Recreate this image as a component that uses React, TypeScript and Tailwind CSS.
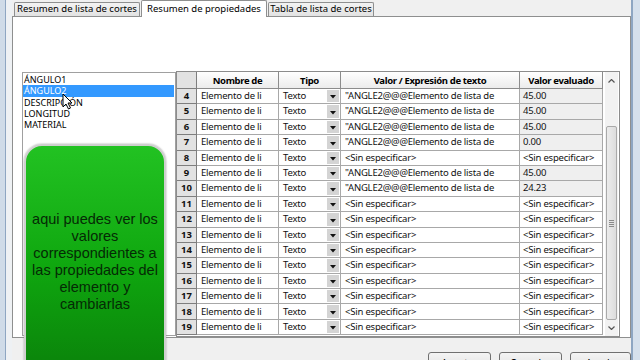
import React from "react";

type Row = { n: number; v: string; e: string };
const Q = '"ANGLE2@@@Elemento de lista de';
const S = "<Sin especificar>";
const rows: Row[] = [
  { n: 4, v: Q, e: "45.00" },
  { n: 5, v: Q, e: "45.00" },
  { n: 6, v: Q, e: "45.00" },
  { n: 7, v: Q, e: "0.00" },
  { n: 8, v: S, e: S },
  { n: 9, v: Q, e: "45.00" },
  { n: 10, v: Q, e: "24.23" },
  { n: 11, v: S, e: S },
  { n: 12, v: S, e: S },
  { n: 13, v: S, e: S },
  { n: 14, v: S, e: S },
  { n: 15, v: S, e: S },
  { n: 16, v: S, e: S },
  { n: 17, v: S, e: S },
  { n: 18, v: S, e: S },
  { n: 19, v: S, e: S },
];

function DownTri() {
  return (
    <svg width="6" height="4" viewBox="0 0 6 4">
      <path d="M0 0 H6 L3 3.5 Z" fill="#111" />
    </svg>
  );
}

function GridRow({ r }: { r: Row }) {
  const numeric = r.e !== S;
  return (
    <div className="flex h-[15.4px] text-[9.5px] tracking-[-0.2px] text-[#111]">
      <div className="w-[20px] shrink-0 bg-[#e2e2e2] border-r border-b border-[#7e7e7e] flex items-center justify-center font-bold tracking-normal">
        {r.n}
      </div>
      <div className="w-[82px] shrink-0 border-r border-b border-[#a8a8a8] bg-white flex items-center pl-[4px] overflow-hidden whitespace-nowrap">
        Elemento de li
      </div>
      <div className="w-[62px] shrink-0 border-r border-b border-[#a8a8a8] bg-white flex">
        <span className="flex-1 flex items-center pl-[4px]">Texto</span>
        <span className="w-[12px] my-[1px] mr-[1px] bg-[#d4d4d4] flex items-end justify-center pb-[3px]">
          <DownTri />
        </span>
      </div>
      <div className="w-[179px] shrink-0 border-r border-b border-[#a8a8a8] bg-white flex items-center pl-[4px] overflow-hidden whitespace-nowrap">
        {r.v}
      </div>
      <div
        className={
          "w-[83px] shrink-0 border-r border-b border-[#a8a8a8] flex items-center pl-[3px] overflow-hidden whitespace-nowrap " +
          (numeric ? "bg-[#efefef]" : "bg-white")
        }
      >
        {r.e}
      </div>
    </div>
  );
}

export default function App() {
  return (
    <div className="relative w-[640px] h-[360px] overflow-hidden flex bg-[#f0f0f0] font-['Noto_Sans',sans-serif] text-black">
      {/* left window frame */}
      <div className="flex w-[12px] shrink-0">
        <div className="w-[5px] bg-[#cfdbe8]" />
        <div className="w-[1px] bg-[#8ea6c2]" />
        <div className="w-[6px] bg-[#eef1f4]" />
      </div>

      {/* dialog content */}
      <div className="w-[619px] shrink-0 flex flex-col">
        {/* tabs */}
        <div className="h-[16px] flex items-end pl-[2px] gap-[1px] text-[9.5px]">
          <div className="w-[126px] h-[14px] border border-b-0 border-[#8e8f8f] rounded-t-[2px] bg-gradient-to-b from-[#f3f3f3] to-[#e2e2e2] flex items-center justify-center whitespace-nowrap">
            Resumen de lista de cortes
          </div>
          <div className="w-[126px] h-[17px] -mb-[1px] relative z-10 border border-b-0 border-[#8e8f8f] rounded-t-[2px] bg-white flex items-start pt-[1px] justify-center whitespace-nowrap">
            Resumen de propiedades
          </div>
          <div className="w-[106px] h-[14px] border border-b-0 border-[#8e8f8f] rounded-t-[2px] bg-gradient-to-b from-[#f3f3f3] to-[#e2e2e2] flex items-center justify-center whitespace-nowrap">
            Tabla de lista de cortes
          </div>
        </div>

        {/* panel */}
        <div className="h-[324px] border border-[#8e8f8f] bg-white pl-[9px] pt-[54px] flex items-start">
          {/* list */}
          <div className="w-[154px] h-[264px] mt-[1px] border border-[#a0a0a0] bg-white text-[9px] leading-[11.3px] pt-[1px]">
            <div className="pl-[1px]">ÁNGULO1</div>
            <div className="pl-[1px] mr-[1px] bg-[#3399ff] text-white">ÁNGULO2</div>
            <div className="pl-[1px]">DESCRIPCIÓN</div>
            <div className="pl-[1px]">LONGITUD</div>
            <div className="pl-[1px]">MATERIAL</div>
          </div>

          {/* grid */}
          <div className="w-[444px] h-[266px] border border-[#8c8c8c] bg-white flex">
            <div className="w-[426px] flex flex-col">
              <div className="flex h-[17px] text-[9.5px] tracking-[-0.35px] font-bold leading-[11px]">
                <div className="w-[20px] shrink-0 bg-[#e2e2e2] border-r border-b border-[#7e7e7e]" />
                <div className="w-[82px] shrink-0 border-r border-b border-[#8c8c8c] bg-gradient-to-b from-white to-[#ececec] text-center pt-[3px] overflow-hidden">
                  Nombre de propiedad
                </div>
                <div className="w-[62px] shrink-0 border-r border-b border-[#8c8c8c] bg-gradient-to-b from-white to-[#ececec] text-center pt-[3px]">
                  Tipo
                </div>
                <div className="w-[179px] shrink-0 border-r border-b border-[#8c8c8c] bg-gradient-to-b from-white to-[#ececec] text-center pt-[3px] whitespace-nowrap">
                  Valor / Expresión de texto
                </div>
                <div className="w-[83px] shrink-0 border-r border-b border-[#8c8c8c] bg-gradient-to-b from-white to-[#ececec] text-center pt-[3px] whitespace-nowrap">
                  Valor evaluado
                </div>
              </div>
              {rows.map((r) => (
                <GridRow key={r.n} r={r} />
              ))}
            </div>
            {/* scrollbar */}
            <div className="ml-[2px] w-[13px] flex flex-col bg-[#f2f2f2]">
              <div className="h-[17px] flex items-center justify-center">
                <svg width="7" height="4" viewBox="0 0 7 4">
                  <path d="M0.5 3.5 L3.5 0.5 L6.5 3.5" stroke="#555" strokeWidth="1.2" fill="none" />
                </svg>
              </div>
              <div className="h-[37px]" />
              <div className="h-[194px] mx-[1px] border border-[#a9a9a9] rounded-[2px] bg-gradient-to-r from-[#ececec] to-[#dcdcdc] flex flex-col items-center justify-center gap-[1px]">
                <div className="w-[5px] h-[1px] bg-[#8a8a8a]" />
                <div className="w-[5px] h-[1px] bg-[#8a8a8a]" />
                <div className="w-[5px] h-[1px] bg-[#8a8a8a]" />
                <div className="w-[5px] h-[1px] bg-[#8a8a8a]" />
              </div>
              <div className="flex-1 flex items-center justify-center">
                <svg width="7" height="4" viewBox="0 0 7 4">
                  <path d="M0.5 0.5 L3.5 3.5 L6.5 0.5" stroke="#555" strokeWidth="1.2" fill="none" />
                </svg>
              </div>
            </div>
          </div>
        </div>

        {/* bottom buttons */}
        <div className="flex justify-end gap-[8px] pt-[14px] text-[10px]">
          <div className="w-[63px] h-[22px] shrink-0 border border-[#707070] rounded-[3px] bg-gradient-to-b from-[#f4f4f4] to-[#dedede] flex justify-center pt-[3px]">
            Aceptar
          </div>
          <div className="w-[63px] h-[22px] shrink-0 border border-[#707070] rounded-[3px] bg-gradient-to-b from-[#f4f4f4] to-[#dedede] flex justify-center pt-[3px]">
            Cancelar
          </div>
          <div className="w-[61px] h-[22px] shrink-0 border border-[#707070] rounded-[3px] bg-gradient-to-b from-[#f4f4f4] to-[#dedede] flex justify-center pt-[3px]">
            Ayuda
          </div>
        </div>
      </div>

      {/* right window frame */}
      <div className="flex flex-1">
        <div className="w-[2px] bg-[#8ea6c2]" />
        <div className="flex-1 bg-[#d5e0ec]" />
      </div>

      {/* annotation callout */}
      <div className="absolute left-[24px] top-[144px] w-[142px] h-[240px] rounded-[18px] border-[2px] border-[#cfcfcf] shadow-[0_0_2px_#9a9a9a] bg-gradient-to-b from-[#22c222] via-[#0fa80f] to-[#0a7f0a] flex flex-col items-center pt-[65px] text-center font-['Liberation_Sans',Arial,sans-serif] text-[14.5px] leading-[17px] text-[#052a05]">
        <div>
          aqui puedes ver los
          <br />
          valores
          <br />
          correspondientes a
          <br />
          las propiedades del
          <br />
          elemento y
          <br />
          cambiarlas
        </div>
      </div>

      {/* mouse cursor */}
      <svg className="absolute left-[62px] top-[93px]" width="11" height="17" viewBox="0 0 11 17">
        <path d="M1 1 L1 14 L4 11 L6.5 16 L8.5 15 L6 10 L10 10 Z" fill="#fff" stroke="#000" strokeWidth="1" strokeLinejoin="round" />
      </svg>
    </div>
  );
}
